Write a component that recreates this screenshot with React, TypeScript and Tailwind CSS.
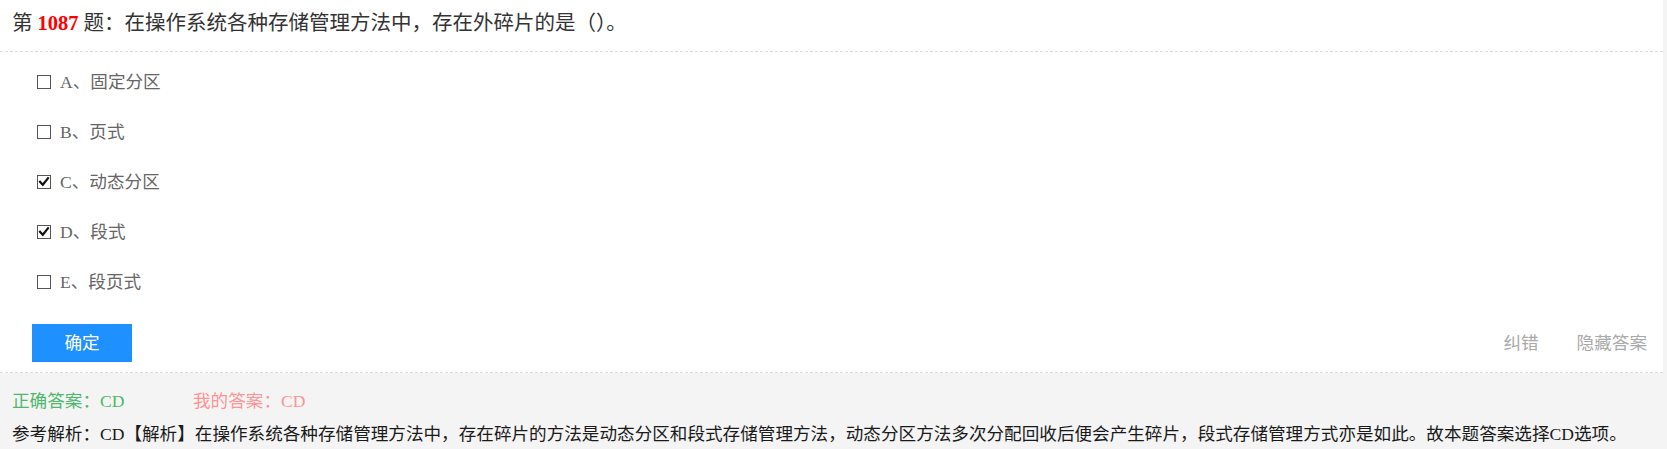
import * as React from "react";

type Option = { key: string; text: string; checked: boolean };

const options: Option[] = [
    { key: "A", text: "固定分区", checked: false },
    { key: "B", text: "页式", checked: false },
    { key: "C", text: "动态分区", checked: true },
    { key: "D", text: "段式", checked: true },
    { key: "E", text: "段页式", checked: false },
];

function CheckBox({ checked }: { checked: boolean }) {
    return (
        <svg width="16" height="16" viewBox="0 0 16 16" className="shrink-0">
            <rect x="1.5" y="1.5" width="13" height="13" fill="#fff" stroke="#555" strokeWidth="1" />
            {checked && <path d="M4 7.8 L6.8 10.8 L12 4.2" fill="none" stroke="#111" strokeWidth="2.2" strokeLinecap="square" />}
        </svg>
    );
}

export default function App() {
    return (
        <div className="min-h-[449px] bg-[#f4f4f4] font-['Liberation_Serif','Noto_Sans_CJK_SC',serif]">
            <div className="mr-[4px] border-b border-dashed border-[#ddd] bg-white">
                <div className="flex h-[52px] items-center border-b border-dashed border-[#ddd] pb-[5px] pl-[12px] text-[20.5px] text-[#333]">
                    <span>第</span>
                    <span className="mx-[5px] font-bold text-[#ff0000]">1087</span>
                    <span>题：在操作系统各种存储管理方法中，存在外碎片的是（）。</span>
                </div>
                <div className="pl-[36px] pt-[5px]">
                    {options.map((o) => (
                        <div key={o.key} className="flex h-[50px] items-center gap-[8px] text-[17.6px] text-[#666]">
                            <CheckBox checked={o.checked} />
                            <span>{o.key}、{o.text}</span>
                        </div>
                    ))}
                </div>
                <div className="mt-[17px] flex items-center justify-between pb-[10px] pl-[32px] pr-[16px]">
                    <button className="h-[38px] w-[100px] bg-[#1e90ff] text-[17.6px] text-white">确定</button>
                    <div className="flex gap-[38px] text-[17.6px] text-[#aaa]">
                        <span>纠错</span>
                        <span>隐藏答案</span>
                    </div>
                </div>
            </div>
            <div className="pl-[12px] pt-[14px] text-[17.6px]">
                <div className="flex h-[28px] items-center">
                    <span className="w-[181px] text-[#4cb86a]">正确答案：CD</span>
                    <span className="text-[#ff9494]">我的答案：CD</span>
                </div>
                <div className="mt-[5px] flex h-[28px] items-center text-[#1a1a1a]">
                    参考解析：CD【解析】在操作系统各种存储管理方法中，存在碎片的方法是动态分区和段式存储管理方法，动态分区方法多次分配回收后便会产生碎片，段式存储管理方式亦是如此。故本题答案选择CD选项。
                </div>
            </div>
        </div>
    );
}
